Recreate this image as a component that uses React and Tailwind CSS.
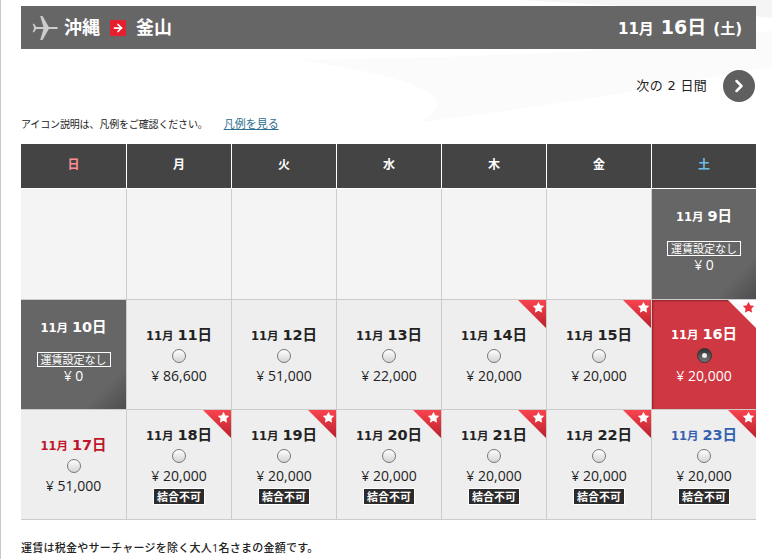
import React from "react";
import { ChevronRight, ArrowRight, Star } from "lucide-react";

const weekdays = [
  { label: "日", color: "text-[#ff8f96]" },
  { label: "月", color: "text-white" },
  { label: "火", color: "text-white" },
  { label: "水", color: "text-white" },
  { label: "木", color: "text-white" },
  { label: "金", color: "text-white" },
  { label: "土", color: "text-[#6cbde0]" },
];

const cells = [
  { type: "empty" },
  { type: "empty" },
  { type: "empty" },
  { type: "empty" },
  { type: "empty" },
  { type: "empty" },
  { type: "none", day: 9 },
  { type: "none", day: 10 },
  { day: 11, price: "86,600" },
  { day: 12, price: "51,000" },
  { day: 13, price: "22,000" },
  { day: 14, price: "20,000", star: true },
  { day: 15, price: "20,000", star: true },
  { type: "selected", day: 16, price: "20,000", star: true },
  { day: 17, price: "51,000", dateColor: "text-[#c0152a]" },
  { day: 18, price: "20,000", star: true, locked: true },
  { day: 19, price: "20,000", star: true, locked: true },
  { day: 20, price: "20,000", star: true, locked: true },
  { day: 21, price: "20,000", star: true, locked: true },
  { day: 22, price: "20,000", star: true, locked: true },
  { day: 23, price: "20,000", star: true, locked: true, dateColor: "text-[#3560b0]" },
];

function DateLabel({ day, color }) {
  return (
    <div className={`font-bold leading-[20px] text-[11.5px] font-['DejaVu_Sans','Noto_Sans_CJK_JP',sans-serif] ${color}`}>
      11月 <span className="text-[14.5px]">{day}日</span>
    </div>
  );
}

function Ribbon({ selected }) {
  return (
    <div className="absolute top-0 right-0 w-[28px] h-[28px]">
      <div
        className={`absolute inset-0 [clip-path:polygon(0_0,100%_0,100%_100%)] ${
          selected ? "bg-white" : "bg-gradient-to-b from-[#f9444f] to-[#b9202c]"
        }`}
      />
      <Star
        size={13}
        strokeWidth={0}
        className={`absolute top-[1px] right-[1px] ${selected ? "fill-[#e8323f]" : "fill-white"}`}
      />
    </div>
  );
}

function Radio({ selected }) {
  if (selected) {
    return (
      <div className="w-[15px] h-[15px] my-[3px] rounded-full border border-[#333] bg-gradient-to-b from-[#333] to-[#777] flex items-center justify-center">
        <div className="w-[5px] h-[5px] rounded-full bg-[#eee]" />
      </div>
    );
  }
  return <div className="w-[14px] h-[14px] my-[3px] rounded-full border border-[#777] bg-gradient-to-b from-white to-[#d4d4d4]" />;
}

function Cell({ cell, last }) {
  const borders = `border-b ${last ? "" : "border-r"} border-[#ccc]`;
  if (cell.type === "empty") {
    return <div className={`bg-[#f4f4f4] ${borders}`} />;
  }
  if (cell.type === "none") {
    return (
      <div className={`flex flex-col items-center justify-center pb-[9px] text-white bg-gradient-to-br from-[#666] via-[#666] via-80% to-[#4e4e4e] ${borders}`}>
        <DateLabel day={cell.day} color="text-white" />
        <div className="mt-[14px] border border-white px-[3px] text-[11px] leading-[13px]">運賃設定なし</div>
        <div className="mt-[1px] text-[14px] leading-[16px]">¥ 0</div>
      </div>
    );
  }
  const selected = cell.type === "selected";
  return (
    <div
      className={`relative flex flex-col items-center justify-center pt-[1px] ${
        selected ? "bg-[#cf3842] text-white shadow-[inset_1px_1px_2px_#8f2028] border-b border-[#ccc]" : `bg-[#eee] text-[#222] ${borders}`
      }`}
    >
      {cell.star && <Ribbon selected={selected} />}
      <DateLabel day={cell.day} color={cell.dateColor || (selected ? "text-white" : "text-[#222]")} />
      <Radio selected={selected} />
      <div className="text-[14px] leading-[20px]">¥ {cell.price}</div>
      {cell.locked && (
        <div className="mt-[2px] bg-[#2b2b2b] border border-white text-white text-[11px] font-bold leading-[15px] px-[3px]">結合不可</div>
      )}
    </div>
  );
}

export default function App() {
  return (
    <div className="relative h-screen overflow-hidden bg-white border-l border-[#c8c8c8] pl-[20px] pr-[16px] pt-[6px] text-[#222] font-['Open_Sans','Noto_Sans_CJK_JP',sans-serif]">
      {/* faint swoosh behind the header */}
      <svg className="absolute inset-0 w-full h-[130px] pointer-events-none" viewBox="0 0 772 130" preserveAspectRatio="none">
        <path d="M520 0 H772 V18 C700 10 620 6 520 0Z" fill="#f5f5f5" />
        <path d="M300 60 C520 56 680 50 772 30 V66 C680 84 560 105 420 122 C470 95 400 75 300 60Z" fill="#fbfbfb" />
      </svg>

      {/* Flight header */}
      <div className="relative h-[43px] bg-[#666] text-white flex items-center pl-[11px] pr-[14px]">
        <svg width="26" height="26" viewBox="0 0 24 24" className="fill-[#ccc]">
          <path d="M24 12c0-.7-1-1-2-1h-6.5L9.7 1H7.6l3 10H4L1.9 8H.6L2 12 .6 16h1.3L4 13h6.6l-3 10h2.1l5.8-10H22c1 0 2-.3 2-1z" />
        </svg>
        <span className="ml-[6px] text-[18px] font-bold">沖縄</span>
        <span className="ml-[10px] w-[16px] h-[16px] bg-[#e4202e] flex items-center justify-center">
          <ArrowRight size={12} strokeWidth={3.5} />
        </span>
        <span className="ml-[10px] text-[18px] font-bold">釜山</span>
        <div className="ml-auto font-bold text-[15px] flex items-baseline gap-[7px] font-['DejaVu_Sans','Noto_Sans_CJK_JP',sans-serif]">
          <span>11月</span>
          <span className="text-[19px]">16日</span>
          <span>(土)</span>
        </div>
      </div>

      {/* Next days */}
      <div className="relative mt-[21px] h-[32px] flex items-center justify-end pr-[1px]">
        <span className="text-[13px] tracking-[0.3px] font-['DejaVu_Sans','Noto_Sans_CJK_JP',sans-serif]">次の 2 日間</span>
        <button className="ml-[16px] w-[32px] h-[32px] rounded-full bg-[#5f5f5f] text-white flex items-center justify-center">
          <ChevronRight size={20} strokeWidth={3} />
        </button>
      </div>

      {/* Legend */}
      <div className="relative mt-[14px] h-[16px] flex items-center text-[10px]">
        <span className="tracking-[-0.15px]">アイコン説明は、凡例をご確認ください。</span>
        <a className="ml-[16px] text-[11px] text-[#2f6f8f] underline">凡例を見る</a>
      </div>

      {/* Calendar */}
      <div className="relative mt-[12px] grid grid-cols-[106px_repeat(5,105px)_1fr] grid-rows-[45px_111px_110px_110px]">
        {weekdays.map((w, i) => (
          <div
            key={w.label}
            className={`bg-[#444] flex items-center justify-center border-b border-white text-[12px] font-bold pb-[2px] ${w.color} ${i < 6 ? "border-r" : ""}`}
          >
            {w.label}
          </div>
        ))}
        {cells.map((c, i) => (
          <Cell key={i} cell={c} last={i % 7 === 6} />
        ))}
      </div>

      <p className="relative mt-[20px] text-[11px] font-medium tracking-[0.25px]">運賃は税金やサーチャージを除く大人1名さまの金額です。</p>
    </div>
  );
}
